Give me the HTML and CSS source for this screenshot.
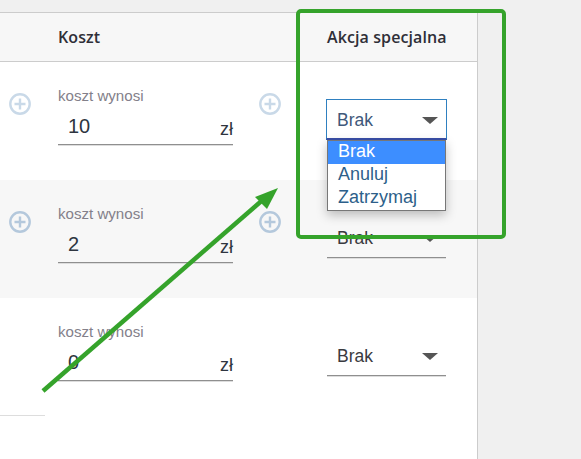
FILE: index.html
```html
<!DOCTYPE html>
<html lang="pl">
<head>
<meta charset="utf-8">
<title>Koszt</title>
<link rel="stylesheet" href="styles.css">
</head>
<body>
<div class="page">
  <main class="table">
    <header class="row head">
      <div class="head-cost">Koszt</div>
      <div class="head-action">Akcja specjalna</div>
    </header>

    <section class="row body">
      <svg class="plus plus-first" viewBox="0 0 22 22"><circle cx="11" cy="11" r="9.7"/><path d="M11 5.5v11M5.5 11h11"/></svg>
      <div class="cost">
        <span class="cost-label">koszt wynosi</span>
        <div class="cost-field"><span class="cost-value">10</span><span class="cost-unit">zł</span></div>
      </div>
      <svg class="plus plus-second" viewBox="0 0 22 22"><circle cx="11" cy="11" r="9.7"/><path d="M11 5.5v11M5.5 11h11"/></svg>
      <div class="action">
        <div class="select select-open"><span class="select-text">Brak</span><span class="caret"></span></div>
        <ul class="menu">
          <li class="menu-item menu-item-active">Brak</li>
          <li class="menu-item">Anuluj</li>
          <li class="menu-item">Zatrzymaj</li>
        </ul>
      </div>
    </section>

    <section class="row body shaded">
      <svg class="plus plus-first plus-strong" viewBox="0 0 22 22"><circle cx="11" cy="11" r="9.7"/><path d="M11 5.5v11M5.5 11h11"/></svg>
      <div class="cost">
        <span class="cost-label">koszt wynosi</span>
        <div class="cost-field"><span class="cost-value">2</span><span class="cost-unit">zł</span></div>
      </div>
      <svg class="plus plus-second plus-strong" viewBox="0 0 22 22"><circle cx="11" cy="11" r="9.7"/><path d="M11 5.5v11M5.5 11h11"/></svg>
      <div class="action">
        <div class="select"><span class="select-text">Brak</span><span class="caret"></span></div>
      </div>
    </section>

    <section class="row body">
      <div class="spacer-first"></div>
      <div class="cost">
        <span class="cost-label">koszt wynosi</span>
        <div class="cost-field"><span class="cost-value">0</span><span class="cost-unit">zł</span></div>
      </div>
      <div class="spacer-second"></div>
      <div class="action">
        <div class="select"><span class="select-text">Brak</span><span class="caret"></span></div>
      </div>
    </section>

    <div class="stub"></div>
  </main>

  <svg class="annotation" viewBox="0 0 581 459">
    <rect class="annotation-box" x="298" y="11" width="206" height="226" rx="3"/>
    <path class="annotation-line" d="M43 391 L266 197"/>
    <path class="annotation-head" d="M278 188 L255 197 L267 209 Z"/>
  </svg>
</div>
</body>
</html>
```
FILE: styles.css
```css
* {
  box-sizing: border-box;
}

html,
body {
  margin: 0;
  height: 100%;
}

body {
  background: #f0f0f0;
  font-family: "Liberation Sans", Arial, sans-serif;
  color: #333;
  overflow: hidden;
}

.page {
  position: relative;
  width: 581px;
  height: 459px;
  padding-top: 12px;
}

.table {
  width: 478px;
  height: 447px;
  background: #fff;
  border-top: 1px solid #ccc;
  border-right: 1px solid #ccc;
}

.row {
  display: flex;
  align-items: flex-start;
}

.head {
  height: 49px;
  background: #f7f7f7;
  border-bottom: 1px solid #ccc;
  padding: 14px 0 0 58px;
  font-family: "Open Sans", sans-serif;
  font-size: 16px;
  line-height: 20px;
  font-weight: 600;
  letter-spacing: 0.1px;
  color: #2f2f38;
}

.head-cost {
  width: 269px;
}

.head-action {
  white-space: nowrap;
}

.body {
  height: 118px;
}

.shaded {
  background: #f7f7f7;
}

.plus {
  flex: none;
  width: 22px;
  height: 22px;
  margin-top: 31px;
  fill: none;
  stroke: #c9d9e8;
  stroke-width: 2.4;
}

.plus-strong {
  stroke: #b4c8dc;
}

.plus-first {
  margin-left: 9px;
  margin-right: 27px;
}

.plus-second {
  margin-left: 26px;
  margin-right: 46px;
}

.spacer-first {
  flex: none;
  width: 58px;
}

.spacer-second {
  flex: none;
  width: 94px;
}

.cost {
  flex: none;
  width: 175px;
  padding-top: 26px;
}

.cost-label {
  display: block;
  font-size: 15.1px;
  line-height: 16px;
  color: #83808a;
}

.cost-field {
  display: flex;
  justify-content: space-between;
  align-items: flex-end;
  height: 41px;
  border-bottom: 1px solid #8f8f8f;
  box-shadow: 0 1px 0 #ddd;
  padding: 0 0 3px 10px;
}

.cost-value {
  font-size: 20px;
  line-height: 30px;
  color: #2e3540;
}

.cost-unit {
  font-size: 18px;
  line-height: 22px;
  margin-bottom: 1px;
  color: #2e3540;
}

.action {
  position: relative;
  flex: none;
  width: 119px;
  padding-top: 37px;
}

.select {
  display: flex;
  justify-content: space-between;
  align-items: center;
  height: 41px;
  padding: 2px 8px 0 10px;
  border-bottom: 1px solid #8f8f8f;
  box-shadow: 0 1px 0 #ddd;
  font-size: 17.5px;
  color: #3a3a40;
}

.select-open {
  width: 121px;
  margin-left: -1px;
  border: 1px solid #2f80c0;
  border-bottom: 2px solid #3a4fa8;
  box-shadow: none;
  color: #40587a;
}

.caret {
  width: 0;
  height: 0;
  border-left: 8px solid transparent;
  border-right: 8px solid transparent;
  border-top: 7px solid #555;
}

.menu {
  position: absolute;
  top: 78px;
  left: 0;
  width: 119px;
  margin: 0;
  padding: 0;
  list-style: none;
  background: #fff;
  border: 1px solid #777;
  box-shadow: 0 4px 10px rgba(0, 0, 0, 0.25);
  font-size: 18px;
  line-height: 21px;
  color: #2d5f8a;
}

.menu-item {
  height: 23px;
  padding-left: 10px;
}

.menu-item-active {
  background: #3d8eff;
  color: #fff;
}

.stub {
  width: 45px;
  height: 1px;
  margin-top: -1px;
  background: #ddd;
}

.annotation {
  position: absolute;
  top: 0;
  left: 0;
  width: 581px;
  height: 459px;
}

.annotation-box {
  fill: none;
  stroke: #35a32b;
  stroke-width: 4;
}

.annotation-line {
  fill: none;
  stroke: #35a32b;
  stroke-width: 4.5;
}

.annotation-head {
  fill: #35a32b;
}
```
